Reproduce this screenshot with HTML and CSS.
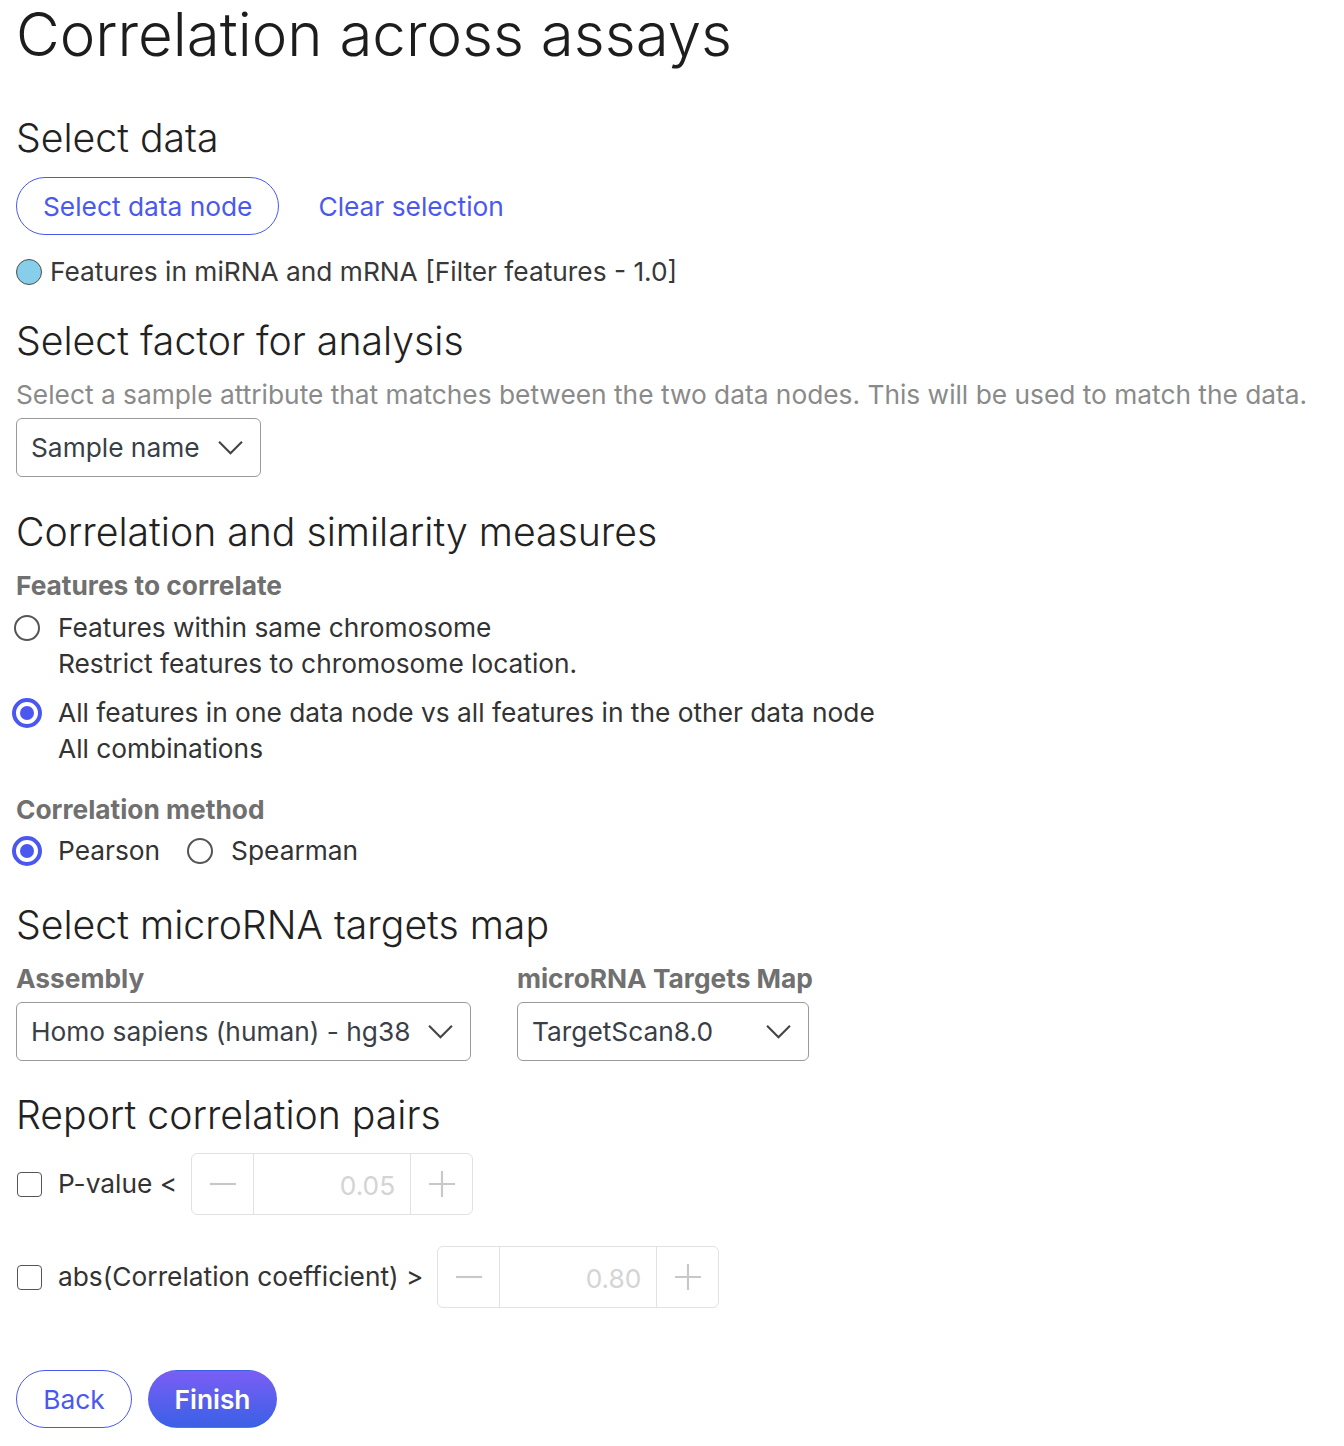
FILE: index.html
```html
<!DOCTYPE html>
<html lang="en">

<head>
  <meta charset="UTF-8">
  <meta name="viewport" content="width=device-width, initial-scale=1.0">
  <title>Correlation across assays</title>
  <link rel="stylesheet" href="styles.css">
</head>

<body>
  <h1 class="page_title">Correlation across assays</h1>

  <!-- 数据选择 -->
  <section class="block block-first">
    <h2 class="block_title">Select data</h2>
    <div class="btn_row">
      <button class="btn btn-outline">Select data node</button>
      <button class="btn btn-link">Clear selection</button>
    </div>
    <div class="node_item">
      <span class="node_dot"></span>
      <span>Features in miRNA and mRNA [Filter features - 1.0]</span>
    </div>
  </section>

  <section class="block block-factor">
    <h2 class="block_title">Select factor for analysis</h2>
    <p class="hint">Select a sample attribute that matches between the two data nodes. This will be used to match the data.</p>
    <div class="select select-factor">
      <span>Sample name</span>
      <svg class="chevron" viewBox="0 0 24 24"><path d="M1 6.5l11 11 11-11" /></svg>
    </div>
  </section>

  <section class="block">
    <h2 class="block_title">Correlation and similarity measures</h2>
    <div class="label">Features to correlate</div>
    <div class="radio_list">
      <label class="radio_item">
        <span class="radio"></span>
        <span class="radio_text">
          <span>Features within same chromosome</span>
          <span>Restrict features to chromosome location.</span>
        </span>
      </label>
      <label class="radio_item">
        <span class="radio checked"></span>
        <span class="radio_text">
          <span>All features in one data node vs all features in the other data node</span>
          <span>All combinations</span>
        </span>
      </label>
    </div>

    <div class="label label-method">Correlation method</div>
    <div class="radio_inline">
      <label class="radio_item"><span class="radio checked"></span><span>Pearson</span></label>
      <label class="radio_item"><span class="radio"></span><span>Spearman</span></label>
    </div>
  </section>

  <section class="block block-map">
    <h2 class="block_title">Select microRNA targets map</h2>
    <div class="map_row">
      <div class="field">
        <div class="label">Assembly</div>
        <div class="select select-assembly">
          <span>Homo sapiens (human) - hg38</span>
          <svg class="chevron" viewBox="0 0 24 24"><path d="M1 6.5l11 11 11-11" /></svg>
        </div>
      </div>
      <div class="field">
        <div class="label">microRNA Targets Map</div>
        <div class="select select-map">
          <span>TargetScan8.0</span>
          <svg class="chevron" viewBox="0 0 24 24"><path d="M1 6.5l11 11 11-11" /></svg>
        </div>
      </div>
    </div>
  </section>

  <section class="block block-pairs">
    <h2 class="block_title">Report correlation pairs</h2>
    <div class="pair_row">
      <span class="checkbox"></span>
      <span class="pair_label">P-value &lt;</span>
      <div class="stepper">
        <span class="step_btn"><svg viewBox="0 0 24 24"><path d="M0 12h24" /></svg></span>
        <span class="step_value">0.05</span>
        <span class="step_btn"><svg viewBox="0 0 24 24"><path d="M0 12h24M12 0v24" /></svg></span>
      </div>
    </div>
    <div class="pair_row">
      <span class="checkbox"></span>
      <span class="pair_label">abs(Correlation coefficient) &gt;</span>
      <div class="stepper">
        <span class="step_btn"><svg viewBox="0 0 24 24"><path d="M0 12h24" /></svg></span>
        <span class="step_value">0.80</span>
        <span class="step_btn"><svg viewBox="0 0 24 24"><path d="M0 12h24M12 0v24" /></svg></span>
      </div>
    </div>
  </section>

  <div class="footer">
    <button class="btn btn-outline btn-back">Back</button>
    <button class="btn btn-primary">Finish</button>
  </div>
</body>

</html>
```

FILE: styles.css
```css
* {
  box-sizing: border-box;
}

body {
  margin: 0;
  padding: 0 16px;
  font-family: Inter, "Noto Sans", sans-serif;
  color: #333;
  font-size: 26.3px;
  line-height: 36px;
}

.page_title {
  margin: 0;
  font-size: 60px;
  font-weight: 300;
  line-height: 68px;
  color: #1d1d1d;
}

.block_title {
  margin: 0;
  font-size: 39.2px;
  font-weight: 300;
  line-height: 48px;
  color: #222;
}

.block {
  margin-top: 31px;
}

.block-first {
  margin-top: 46px;
}

.block-factor {
  margin-top: 27px;
}

.block-map {
  margin-top: 32px;
}

.block-pairs {
  margin-top: 30px;
}

/* 按钮 */
.btn_row {
  display: flex;
  align-items: center;
  gap: 12px;
  margin-top: 15px;
}

.btn {
  font-family: inherit;
  font-size: 26.3px;
  height: 58px;
  padding: 0 26px;
  border-radius: 29px;
  background: #fff;
  border: 1px solid transparent;
  cursor: pointer;
}

.btn-outline {
  color: #4b58f0;
  border-color: #4b58f0;
}

.btn-link {
  color: #4b58f0;
}

.btn-primary {
  color: #fff;
  font-weight: 600;
  background: linear-gradient(to bottom, #7b5ef4, #3a60e6);
}

.node_item {
  display: flex;
  align-items: center;
  gap: 8px;
  margin-top: 19px;
  color: #383838;
}

.node_dot {
  width: 26px;
  height: 26px;
  border-radius: 50%;
  background: #87ceeb;
  border: 1px solid #4d4d4d;
}

.hint {
  margin: 12px 0 0;
  color: #8a8a8a;
}

.select {
  display: flex;
  align-items: center;
  justify-content: space-between;
  height: 59px;
  padding: 0 17px 0 14px;
  border: 1px solid #9a9a9a;
  border-radius: 6px;
  color: #3a3f47;
}

.select-factor {
  width: 245px;
  margin-top: 5px;
}

.select-assembly {
  width: 455px;
}

.select-map {
  width: 292px;
}

.chevron {
  width: 25px;
  height: 25px;
  fill: none;
  stroke: #444;
  stroke-width: 2;
}

.label {
  margin-top: 12px;
  font-weight: 650;
  color: #707070;
}

.radio_list {
  display: flex;
  flex-direction: column;
  gap: 13px;
  margin-top: 6px;
}

.radio_item {
  display: flex;
  align-items: flex-start;
  gap: 18px;
}

.radio_text {
  display: flex;
  flex-direction: column;
}

.radio {
  flex: none;
  width: 26px;
  height: 26px;
  margin: 5px 0 0 -2px;
  border-radius: 50%;
  border: 2px solid #555;
}

.radio.checked {
  width: 30px;
  height: 30px;
  margin: 3px -2px 0 -4px;
  border: 4px solid #4b58f0;
  position: relative;
}

.radio.checked::after {
  content: '';
  position: absolute;
  top: 4px;
  left: 4px;
  width: 14px;
  height: 14px;
  border-radius: 50%;
  background: #4b58f0;
}

.label-method {
  margin-top: 25px;
}

.radio_inline {
  display: flex;
  gap: 29px;
  margin-top: 5px;
}

.map_row {
  display: flex;
  gap: 46px;
}

.field .label {
  margin-bottom: 5px;
}

.pair_row {
  display: flex;
  align-items: center;
  margin-top: 14px;
}

.pair_row+.pair_row {
  margin-top: 31px;
}

.checkbox {
  width: 25px;
  height: 25px;
  border: 1.5px solid #555;
  border-radius: 4px;
  margin: 0 16px 0 1px;
}

.pair_label {
  margin-right: 14px;
}

.stepper {
  display: flex;
  height: 62px;
  border: 1px solid #e2e2e2;
  border-radius: 6px;
}

.step_btn {
  display: flex;
  align-items: center;
  justify-content: center;
  width: 61px;
}

.step_btn svg {
  width: 26px;
  height: 26px;
  fill: none;
  stroke: #c8c8c8;
  stroke-width: 2;
}

.step_value {
  width: 158px;
  display: flex;
  align-items: center;
  justify-content: flex-end;
  padding: 4px 15px 0 0;
  color: #d4d4d4;
  border-left: 1px solid #e2e2e2;
  border-right: 1px solid #e2e2e2;
}

.footer {
  display: flex;
  gap: 16px;
  margin-top: 62px;
  padding-bottom: 18px;
}

.btn-back {
  width: 116px;
  padding: 0;
}

.btn-primary {
  width: 129px;
  padding: 0;
}
```
